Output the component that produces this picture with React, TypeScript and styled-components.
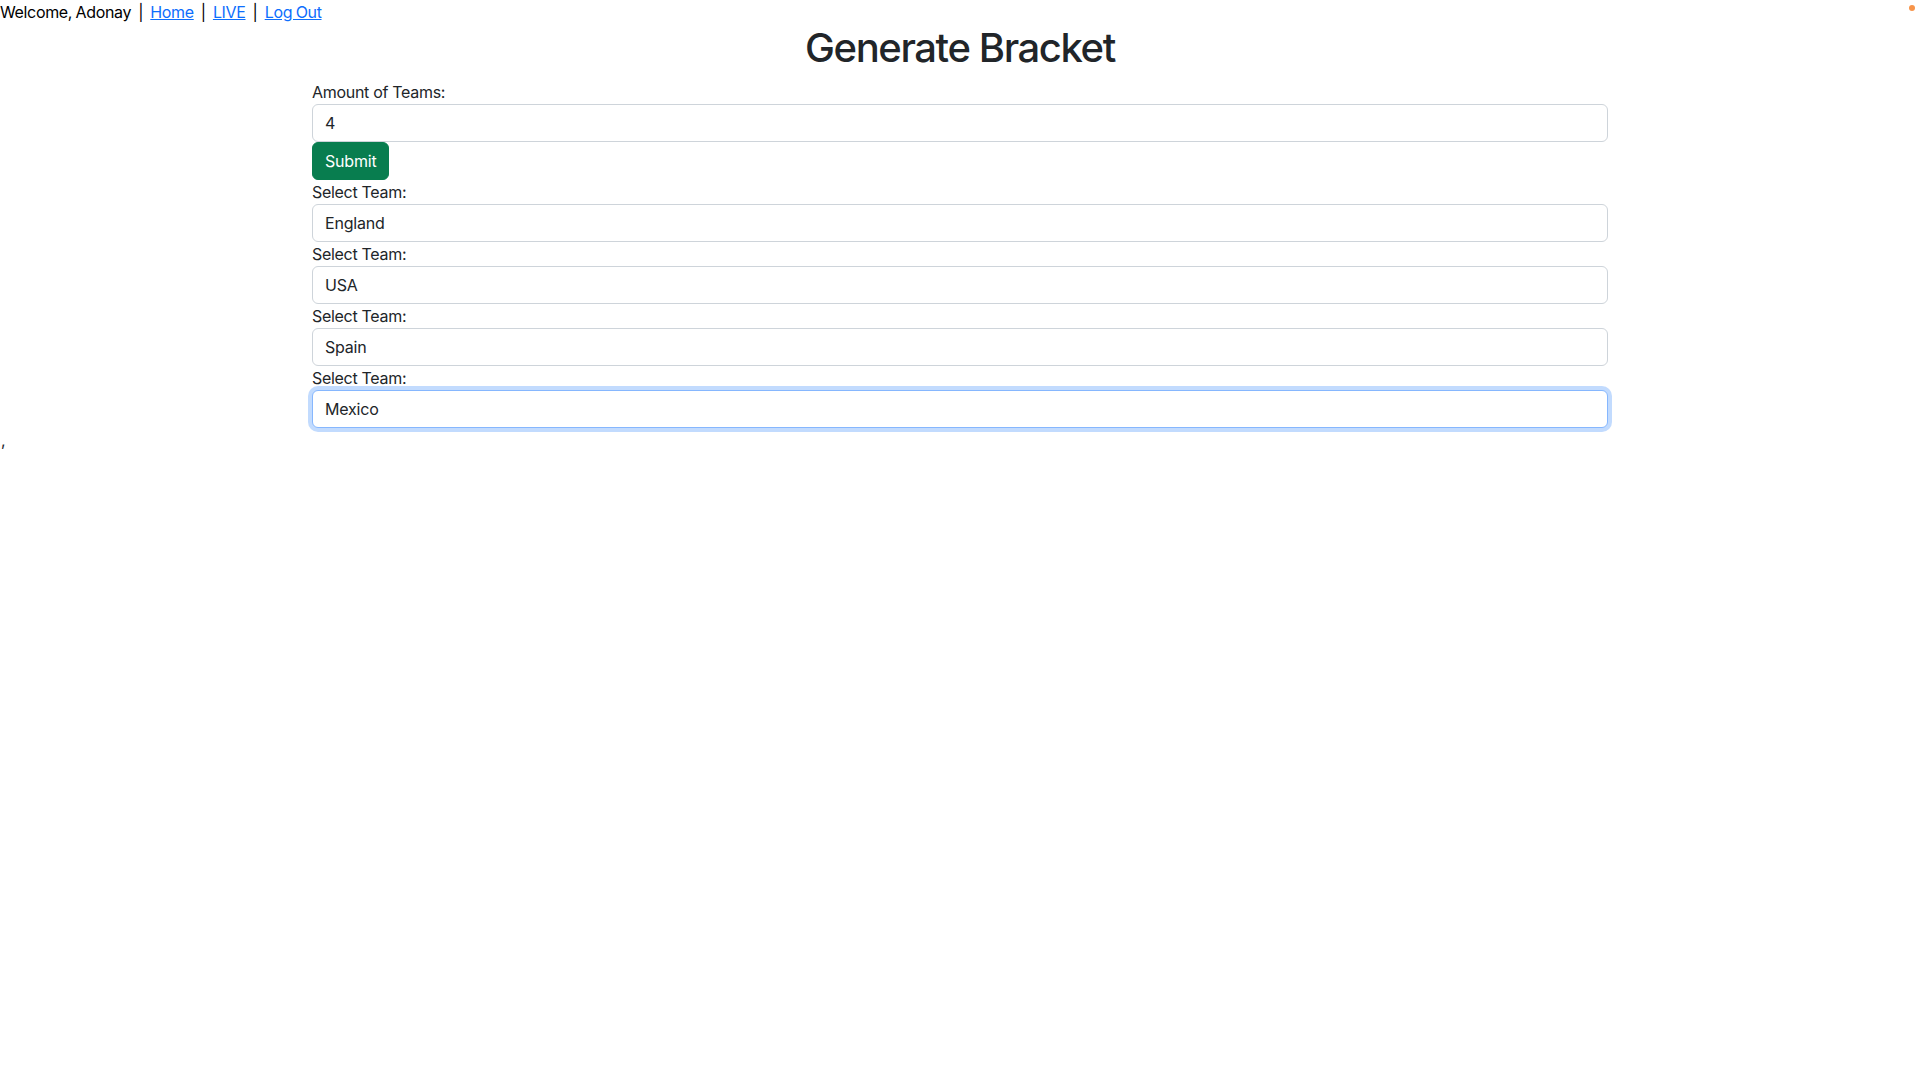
import React, { useState } from 'react';
import styled, { createGlobalStyle } from 'styled-components';

const GlobalStyle = createGlobalStyle`
  *, *::before, *::after { box-sizing: border-box; }
  body {
    margin: 0;
    font-family: Inter, "Liberation Sans", sans-serif;
    font-size: 16px;
    line-height: 1.5;
    letter-spacing: -0.3px;
    color: #212529;
    background: #fff;
  }
`;

const NavBar = styled.div`
  font-size: 16px;
  line-height: 24px;
  letter-spacing: -0.35px;
  word-spacing: -0.6px;
  color: #000;
  white-space: pre;
`;

const NavLink = styled.a`
  color: #0d6efd;
  text-decoration: underline;
`;

const Container = styled.div`
  max-width: 1320px;
  margin: 0 auto;
  padding: 0 12px;
`;

const Title = styled.h1`
  margin: 0 0 8px;
  font-size: 40px;
  font-weight: 500;
  line-height: 1.2;
  text-align: center;
  letter-spacing: -1.4px;
  color: #212529;
`;

const Form = styled.form`
  display: flex;
  flex-direction: column;
  align-items: flex-start;
`;

const Label = styled.label`
  display: block;
  font-size: 16px;
  line-height: 24px;
`;

const Input = styled.input<{ $focused?: boolean }>`
  display: block;
  width: 100%;
  height: 38px;
  padding: 6px 12px;
  font-family: inherit;
  font-size: 16px;
  line-height: 1.5;
  letter-spacing: -0.2px;
  color: #212529;
  background: #fff;
  border: 1px solid ${p => (p.$focused ? '#86b7fe' : '#ced4da')};
  border-radius: 6px;
  outline: none;
  box-shadow: ${p => (p.$focused ? '0 0 0 4px rgba(13, 110, 253, 0.25)' : 'none')};
`;

const SubmitButton = styled.button`
  height: 38px;
  padding: 6px 12px;
  font-family: inherit;
  font-size: 16px;
  line-height: 1.5;
  letter-spacing: -0.2px;
  color: #fff;
  background: #087d4f;
  border: 1px solid #087d4f;
  border-radius: 6px;
  cursor: pointer;
`;

const Stray = styled.div`
  line-height: 24px;
  padding-left: 1px;
`;

const Dot = styled.span`
  position: fixed;
  top: 5px;
  right: 5px;
  width: 6px;
  height: 6px;
  border-radius: 50%;
  background: #f7944a;
`;

export default function App() {
  const [count, setCount] = useState('4');
  const [teams, setTeams] = useState(['England', 'USA', 'Spain', 'Mexico']);

  return (
    <>
      <GlobalStyle />
      <NavBar>
        Welcome, Adonay{'  |  '}
        <NavLink href="#">Home</NavLink>
        {'  |  '}
        <NavLink href="#">LIVE</NavLink>
        {'  |  '}
        <NavLink href="#">Log Out</NavLink>
      </NavBar>
      <Container>
        <Title>Generate Bracket</Title>
        <Form onSubmit={e => e.preventDefault()}>
          <Label>Amount of Teams:</Label>
          <Input value={count} onChange={e => setCount(e.target.value)} />
          <SubmitButton type="submit">Submit</SubmitButton>
          {teams.map((team, i) => (
            <React.Fragment key={i}>
              <Label>Select Team:</Label>
              <Input
                value={team}
                $focused={i === teams.length - 1}
                onChange={e => {
                  const next = [...teams];
                  next[i] = e.target.value;
                  setTeams(next);
                }}
              />
            </React.Fragment>
          ))}
        </Form>
      </Container>
      <Stray>,</Stray>
      <Dot />
    </>
  );
}
